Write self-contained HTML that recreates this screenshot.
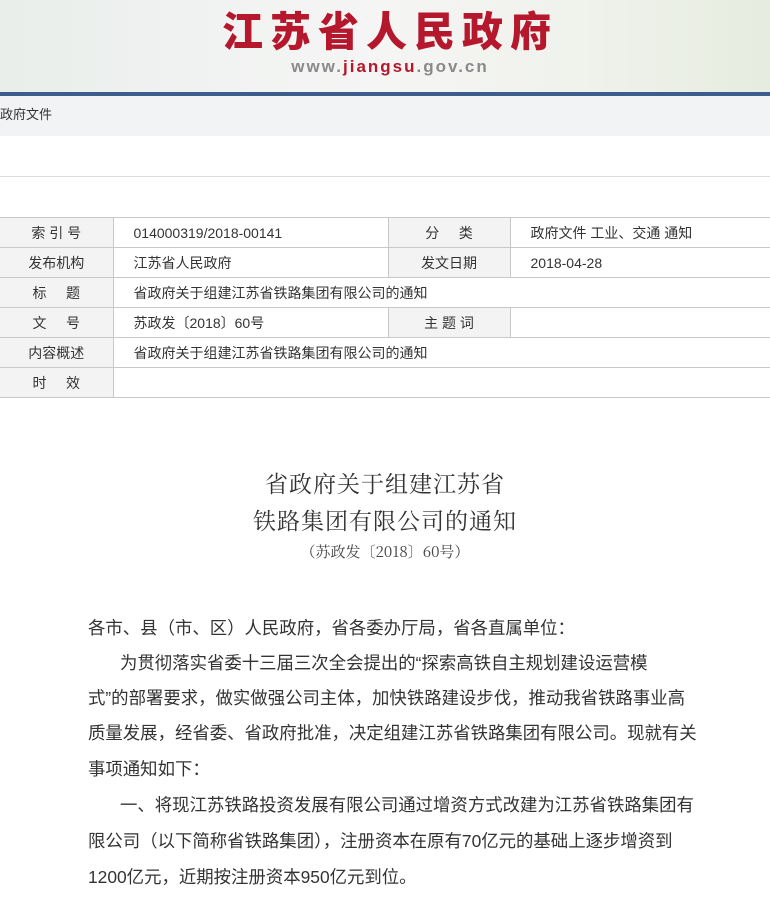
<!DOCTYPE html>
<html><head><meta charset="utf-8">
<style>
*{margin:0;padding:0;box-sizing:border-box}
body{width:770px;height:897px;overflow:hidden;background:#fff;font-family:"Liberation Sans","Noto Sans CJK SC",sans-serif;color:#333;position:relative}
.banner{position:absolute;left:0;top:0;width:770px;height:92px;background:linear-gradient(90deg,#e9eeea 0%,#f1f3f2 30%,#f5f5f4 50%,#f0f2ec 75%,#e6ecdf 100%)}
.banner .t{position:absolute;left:0;width:770px;top:0px;text-align:center;font-family:"Noto Sans CJK SC",sans-serif;font-weight:900;font-size:41px;color:#b5182c;letter-spacing:7px;padding-left:10px;line-height:56px}
.banner .u{position:absolute;left:0;width:770px;top:57px;text-align:center;font-size:17px;color:#8a8a8a;letter-spacing:2px;font-weight:bold;padding-left:10px}
.banner .u b{color:#b5182c}
.bar{position:absolute;left:0;top:92px;width:770px;height:4px;background:#3d5e8c}
.crumb{position:absolute;left:0;top:96px;width:770px;height:40px;background:#f2f3f5;font-size:13px;line-height:38px;color:#333}
.hr{position:absolute;left:0;top:176px;width:770px;height:1px;background:#ddd}
table{position:absolute;left:0;top:217px;width:770px;border-collapse:collapse;font-size:14px;color:#333}
td{border:1px solid #c8c8c8;height:30px;padding:0 0 0 20px}
td.l{background:#f3f3f3;text-align:center;padding:0;width:113px}
td.l2{background:#f3f3f3;text-align:center;padding:0;width:122px}
table tr td:first-child{border-left:none}
table tr td:last-child{border-right:none}
.title{position:absolute;left:0;width:770px;text-align:center;font-family:"Noto Serif CJK SC",serif;font-size:23px;color:#333;letter-spacing:1px}
.sub{position:absolute;left:0;width:770px;top:541px;text-align:center;font-family:"Noto Serif CJK SC",serif;font-size:15px;color:#444}
.p{position:absolute;left:88px;white-space:nowrap;font-size:17.4px;color:#333;line-height:22px}
</style></head><body>
<div class="banner"><div class="t">江苏省人民政府</div><div class="u">www.<b>jiangsu</b>.gov.cn</div></div>
<div class="bar"></div>
<div class="crumb">政府文件</div>
<div class="hr"></div>
<table>
<tr><td class="l">索 引 号</td><td style="width:275px">014000319/2018-00141</td><td class="l2">分 &nbsp; &nbsp; 类</td><td>政府文件 工业、交通 通知</td></tr>
<tr><td class="l">发布机构</td><td>江苏省人民政府</td><td class="l2">发文日期</td><td>2018-04-28</td></tr>
<tr><td class="l">标 &nbsp; &nbsp; 题</td><td colspan="3">省政府关于组建江苏省铁路集团有限公司的通知</td></tr>
<tr><td class="l">文 &nbsp; &nbsp; 号</td><td>苏政发〔2018〕60号</td><td class="l2">主 题 词</td><td></td></tr>
<tr><td class="l">内容概述</td><td colspan="3">省政府关于组建江苏省铁路集团有限公司的通知</td></tr>
<tr><td class="l">时 &nbsp; &nbsp; 效</td><td colspan="3"></td></tr>
</table>
<div class="title" style="top:466px">省政府关于组建江苏省</div>
<div class="title" style="top:503px">铁路集团有限公司的通知</div>
<div class="sub">（苏政发〔2018〕60号）</div>
<div class="p" style="top:617px">各市、县（市、区）人民政府，省各委办厅局，省各直属单位：</div>
<div class="p" style="top:652px;left:120px">为贯彻落实省委十三届三次全会提出的“探索高铁自主规划建设运营模</div>
<div class="p" style="top:687px">式”的部署要求，做实做强公司主体，加快铁路建设步伐，推动我省铁路事业高</div>
<div class="p" style="top:722px">质量发展，经省委、省政府批准，决定组建江苏省铁路集团有限公司。现就有关</div>
<div class="p" style="top:758px">事项通知如下：</div>
<div class="p" style="top:794px;left:120px">一、将现江苏铁路投资发展有限公司通过增资方式改建为江苏省铁路集团有</div>
<div class="p" style="top:830px">限公司（以下简称省铁路集团），注册资本在原有70亿元的基础上逐步增资到</div>
<div class="p" style="top:866px">1200亿元，近期按注册资本950亿元到位。</div>
</body></html>
